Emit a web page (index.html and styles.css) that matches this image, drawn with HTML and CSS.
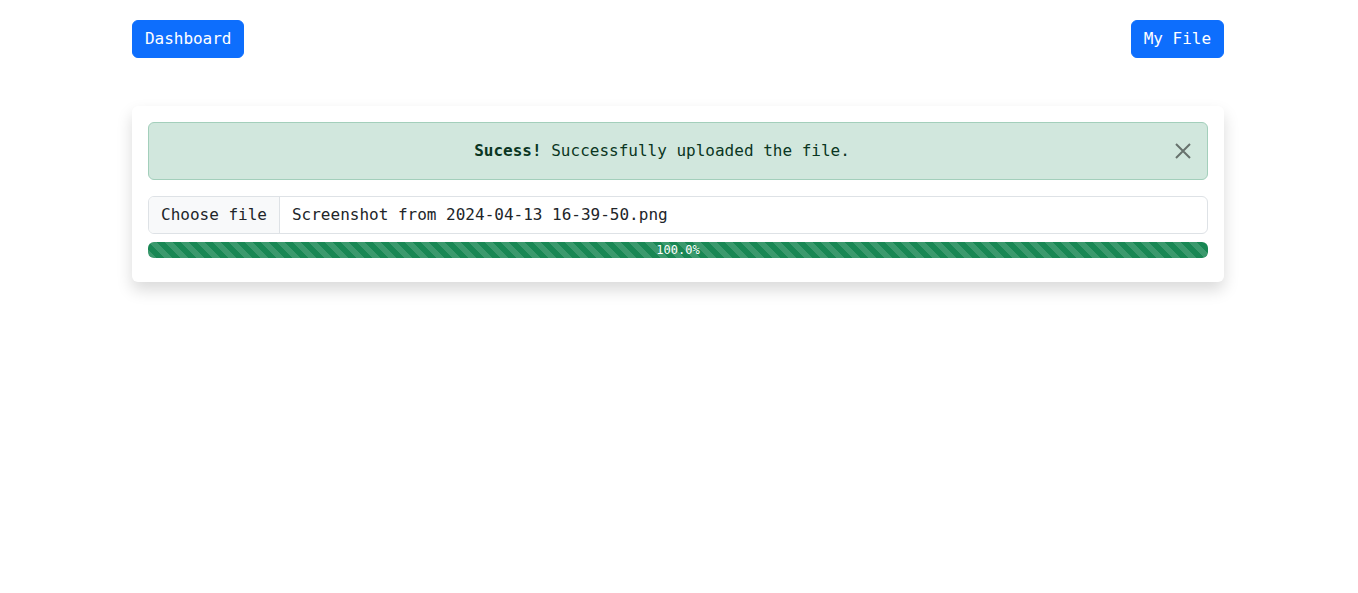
FILE: index.html
```html
<!DOCTYPE html>
<html lang="en">
<head>
<meta charset="utf-8">
<title>Upload</title>
<link rel="stylesheet" href="styles.css">
</head>
<body>
<div class="container">
  <nav class="topbar">
    <a class="btn" href="#">Dashboard</a>
    <a class="btn" href="#">My File</a>
  </nav>
  <div class="card">
    <div class="alert">
      <span><strong>Sucess!</strong> Successfully uploaded the file.</span>
      <button class="btn-close" aria-label="Close">
        <svg viewBox="0 0 16 16" width="16" height="16"><path d="M1 1L15 15M15 1L1 15" stroke="#000" stroke-width="2" fill="none"/></svg>
      </button>
    </div>
    <div class="file-input">
      <span class="file-btn">Choose file</span>
      <span class="file-name">Screenshot from 2024-04-13 16-39-50.png</span>
    </div>
    <div class="progress">
      <div class="progress-bar" style="width:100%">100.0%</div>
    </div>
  </div>
</div>
</body>
</html>
```
FILE: styles.css
```css
* { box-sizing: border-box; }
html, body { margin: 0; padding: 0; background: #fff; }
body {
  font-family: "DejaVu Sans Mono", "Liberation Mono", monospace;
  font-size: 16px;
  line-height: 1.5;
  color: #212529;
  min-height: 593px;
}
.container {
  width: 1092px;
  margin: 0 134px 0 132px;
  padding: 20px 0 60px;
}
.topbar {
  display: flex;
  justify-content: space-between;
  margin-bottom: 48px;
}
.btn {
  display: inline-block;
  padding: 6px 12px;
  border: 1px solid #0d6efd;
  background: #0d6efd;
  color: #fff;
  border-radius: 6px;
  text-decoration: none;
  font-size: 16px;
  line-height: 24px;
  letter-spacing: -0.03px;
}
.card {
  background: #fff;
  border-radius: 6px;
  box-shadow: 0 8px 16px rgba(0,0,0,0.15);
  padding: 16px 16px 24px;
}
.alert {
  position: relative;
  background: #d1e7dd;
  border: 1px solid #a3cfbb;
  color: #0a3622;
  border-radius: 6px;
  padding: 16px 48px 16px 16px;
  text-align: center;
  line-height: 24px;
}
.alert strong { font-weight: 700; }
.btn-close {
  position: absolute;
  top: 0;
  right: 0;
  height: 100%;
  width: 48px;
  border: 0;
  background: transparent;
  display: flex;
  align-items: center;
  justify-content: center;
  opacity: 0.5;
  padding: 0;
  cursor: pointer;
}
.file-input {
  display: flex;
  margin-top: 16px;
  border: 1px solid #dee2e6;
  border-radius: 6px;
  overflow: hidden;
  line-height: 24px;
}
.file-btn {
  background: #f8f9fa;
  border-right: 1px solid #dee2e6;
  padding: 6px 12px;
}
.file-name {
  padding: 6px 12px;
}
.progress {
  margin-top: 8px;
  height: 16px;
  background: #e9ecef;
  border-radius: 6px;
  overflow: hidden;
  display: flex;
}
.progress-bar {
  height: 100%;
  background-color: #198754;
  background-image: linear-gradient(45deg, rgba(255,255,255,.15) 25%, transparent 25%, transparent 50%, rgba(255,255,255,.15) 50%, rgba(255,255,255,.15) 75%, transparent 75%, transparent);
  background-size: 16px 16px;
  color: #fff;
  font-size: 12px;
  line-height: 16px;
  text-align: center;
}
```
